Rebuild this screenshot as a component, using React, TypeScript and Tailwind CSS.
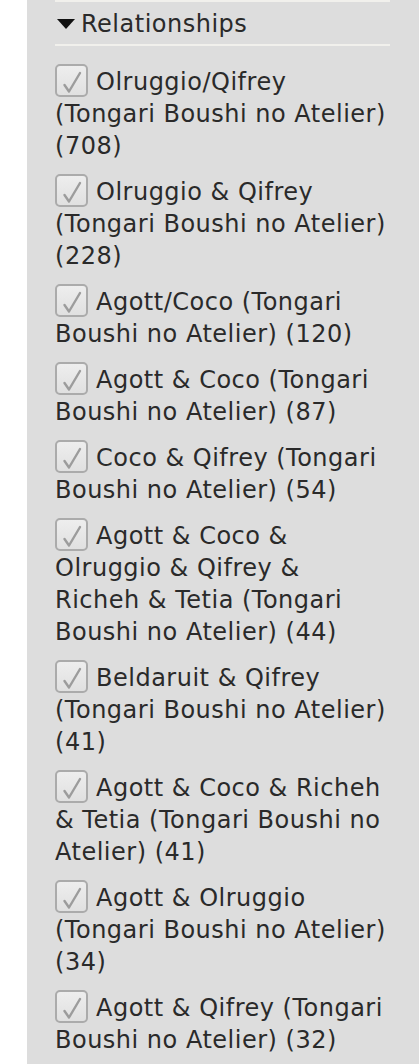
import React from 'react';

const relationships = [
    { name: 'Olruggio/Qifrey (Tongari Boushi no Atelier)', count: 708 },
    { name: 'Olruggio & Qifrey (Tongari Boushi no Atelier)', count: 228 },
    { name: 'Agott/Coco (Tongari Boushi no Atelier)', count: 120 },
    { name: 'Agott & Coco (Tongari Boushi no Atelier)', count: 87 },
    { name: 'Coco & Qifrey (Tongari Boushi no Atelier)', count: 54 },
    { name: 'Agott & Coco & Olruggio & Qifrey & Richeh & Tetia (Tongari Boushi no Atelier)', count: 44 },
    { name: 'Beldaruit & Qifrey (Tongari Boushi no Atelier)', count: 41 },
    { name: 'Agott & Coco & Richeh & Tetia (Tongari Boushi no Atelier)', count: 41 },
    { name: 'Agott & Olruggio (Tongari Boushi no Atelier)', count: 34 },
    { name: 'Agott & Qifrey (Tongari Boushi no Atelier)', count: 32 },
];

function CheckBox() {
    return (
        <span className="inline-block align-top -mb-[2px] w-[33px] h-[33px] mr-[8px] rounded-[5px] border-2 border-[#ababab] bg-gradient-to-b from-[#eeeeee] to-[#e0e0e0]">
            <svg width="29" height="29" viewBox="2 2 29 29" fill="none" className="block">
                <path d="M9.5 21 L14 27.5 L25 9" stroke="#9c9c9c" strokeWidth="2.4" strokeLinecap="round" strokeLinejoin="round" />
            </svg>
        </span>
    );
}

export default function App() {
    return (
        <div className="flex min-h-[1064px] bg-white" style={{ fontFamily: '"DejaVu Sans", Verdana, sans-serif' }}>
            <div className="w-[27px] shrink-0 bg-white" />
            <div className="flex-1 bg-[#dddddd] pl-[28px] pr-[29px]">
                <div className="h-[2px] bg-[#f1f0ec]" />
                <div className="flex items-center h-[42px] pt-[2px] text-[24px] tracking-[0.5px] text-[#2a2a2a]">
                    <span className="mr-[6px] ml-[2px] w-0 h-0 border-l-[9px] border-r-[9px] border-t-[10px] border-l-transparent border-r-transparent border-t-[#111]" />
                    Relationships
                </div>
                <div className="h-[2px] bg-[#f1f0ec]" />
                <ul className="pt-[18px] flex flex-col gap-[14px]">
                    {relationships.map((r, i) => (
                        <li key={i} className="text-[24px] tracking-[0.5px] leading-[32px] text-[#2a2a2a]">
                            <CheckBox />
                            <span className="relative top-[2px]">{r.name} ({r.count})</span>
                        </li>
                    ))}
                </ul>
            </div>
        </div>
    );
}
